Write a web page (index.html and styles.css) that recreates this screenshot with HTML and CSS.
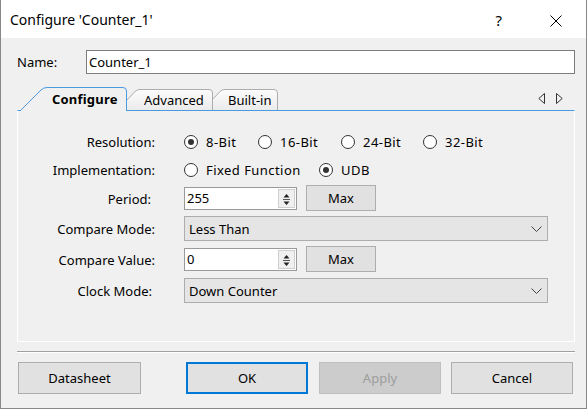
FILE: index.html
```html
<!DOCTYPE html>
<html>
<head>
<meta charset="utf-8">
<link rel="stylesheet" href="styles.css">
</head>
<body>
<div class="window">
  <div class="titlebar">
    <span class="title">Configure 'Counter_1'</span>
    <span class="help">?</span>
    <svg class="close" width="12" height="12" viewBox="0 0 12 12"><path d="M0.5,0.5 L11.5,11.5 M11.5,0.5 L0.5,11.5" stroke="#000" stroke-width="1" fill="none"/></svg>
  </div>
  <div class="content">
    <div class="name-row">
      <span class="name-label">Name:</span>
      <div class="name-box">Counter_1</div>
    </div>
    <div class="tabstrip">
      <div class="tab tab-active">
        <svg class="tab-shape" viewBox="0 0 110 24" preserveAspectRatio="none"><path d="M3,24 L24,3 Q26.5,0.5 30,0.5 L106,0.5 Q109.5,0.5 109.5,4 L109.5,24" fill="#f0f0f0" stroke="#4a9ae0"/></svg>
        <span class="tab-text">Configure</span>
      </div>
      <div class="tab tab-adv">
        <svg class="tab-shape" viewBox="0 0 96 21" preserveAspectRatio="none"><defs><linearGradient id="g1" x1="0" y1="0" x2="0" y2="1"><stop offset="0" stop-color="#fcfcfc"/><stop offset="1" stop-color="#ebebeb"/></linearGradient></defs><path d="M0.5,21 L18,2.5 Q20,0.5 23,0.5 L92,0.5 Q95.5,0.5 95.5,4 L95.5,21" fill="url(#g1)" stroke="#adadad"/></svg>
        <span class="tab-text">Advanced</span>
      </div>
      <div class="tab tab-bi">
        <svg class="tab-shape" viewBox="0 0 76 21" preserveAspectRatio="none"><defs><linearGradient id="g2" x1="0" y1="0" x2="0" y2="1"><stop offset="0" stop-color="#fcfcfc"/><stop offset="1" stop-color="#ebebeb"/></linearGradient></defs><path d="M0.5,21 L18,2.5 Q20,0.5 23,0.5 L72,0.5 Q75.5,0.5 75.5,4 L75.5,21" fill="url(#g2)" stroke="#adadad"/></svg>
        <span class="tab-text">Built-in</span>
      </div>
      <div class="tab-nav">
        <svg width="7" height="11" viewBox="0 0 7 11"><path d="M6.5,0.5 L0.8,5.5 L6.5,10.5 Z" fill="none" stroke="#333" stroke-width="1"/></svg>
        <svg width="7" height="11" viewBox="0 0 7 11"><path d="M0.5,0.5 L6.2,5.5 L0.5,10.5 Z" fill="none" stroke="#333" stroke-width="1"/></svg>
      </div>
    </div>
    <div class="panel">
      <div class="form">
        <span class="lbl">Resolution:</span>
        <div class="ctl">
          <div class="radio w74"><span class="circle checked"></span><span class="rtext">8-Bit</span></div>
          <div class="radio w83"><span class="circle"></span><span class="rtext">16-Bit</span></div>
          <div class="radio w82"><span class="circle"></span><span class="rtext">24-Bit</span></div>
          <div class="radio"><span class="circle"></span><span class="rtext">32-Bit</span></div>
        </div>

        <span class="lbl">Implementation:</span>
        <div class="ctl">
          <div class="radio w135"><span class="circle"></span><span class="rtext">Fixed Function</span></div>
          <div class="radio"><span class="circle checked"></span><span class="rtext">UDB</span></div>
        </div>

        <span class="lbl lbl-period">Period:</span>
        <div class="ctl">
          <div class="spin-input">
            <span class="spin-text">255</span>
            <div class="spin-btns">
              <svg width="15" height="19" viewBox="0 0 15 19"><path d="M7.5,4 L10.5,7.5 L4.5,7.5 Z" fill="#222"/><path d="M4,9.5 L11,9.5" stroke="#555" stroke-width="1"/><path d="M4.5,11.5 L10.5,11.5 L7.5,15 Z" fill="#222"/></svg>
            </div>
          </div>
          <div class="btn max-btn">Max</div>
        </div>

        <span class="lbl">Compare Mode:</span>
        <div class="ctl">
          <div class="dropdown"><span class="dd-text">Less Than</span>
            <svg width="11" height="6" viewBox="0 0 11 6"><path d="M0.5,0.5 L5.5,5.5 L10.5,0.5" fill="none" stroke="#444" stroke-width="1"/></svg>
          </div>
        </div>

        <span class="lbl">Compare Value:</span>
        <div class="ctl">
          <div class="spin-input">
            <span class="spin-text">0</span>
            <div class="spin-btns">
              <svg width="15" height="19" viewBox="0 0 15 19"><path d="M7.5,4 L10.5,7.5 L4.5,7.5 Z" fill="#222"/><path d="M4,9.5 L11,9.5" stroke="#555" stroke-width="1"/><path d="M4.5,11.5 L10.5,11.5 L7.5,15 Z" fill="#222"/></svg>
            </div>
          </div>
          <div class="btn max-btn">Max</div>
        </div>

        <span class="lbl lbl-clock">Clock Mode:</span>
        <div class="ctl">
          <div class="dropdown"><span class="dd-text">Down Counter</span>
            <svg width="11" height="6" viewBox="0 0 11 6"><path d="M0.5,0.5 L5.5,5.5 L10.5,0.5" fill="none" stroke="#444" stroke-width="1"/></svg>
          </div>
        </div>
      </div>
    </div>
    <div class="separator"></div>
    <div class="buttons">
      <div class="btn dlg-btn datasheet">Datasheet</div>
      <div class="btn dlg-btn ok">OK</div>
      <div class="btn dlg-btn apply">Apply</div>
      <div class="btn dlg-btn cancel">Cancel</div>
    </div>
  </div>
</div>
</body>
</html>
```
FILE: styles.css
```css
html, body {
  margin: 0;
  padding: 0;
}
body {
  width: 587px;
  height: 409px;
  overflow: hidden;
  font-family: "Noto Sans", "Liberation Sans", sans-serif;
  font-size: 13px;
  color: #000;
  background: #fff;
}
.window {
  width: 587px;
  height: 409px;
  box-sizing: border-box;
  border: 1px solid #888;
  border-top: none;
  display: flex;
  flex-direction: column;
  background: #f0f0f0;
}
.titlebar {
  height: 38px;
  flex: none;
  box-sizing: border-box;
  background: #fff;
  display: flex;
  align-items: flex-start;
  padding: 10px 24px 0 9px;
}
.title {
  font-size: 14px;
  line-height: 20px;
  flex: 1;
}
.help {
  font-size: 15px;
  line-height: 20px;
  margin-right: 48px;
}
.close {
  margin-top: 5px;
}
.content {
  flex: 1;
  display: flex;
  flex-direction: column;
  padding: 12px 11px 0 16px;
}
.name-row {
  display: flex;
  align-items: center;
  height: 24px;
}
.name-label {
  width: 69px;
}
.name-box {
  flex: 1;
  height: 24px;
  box-sizing: border-box;
  border: 1px solid #7d7d7d;
  background: #fff;
  padding-left: 2px;
  line-height: 22px;
}
.tabstrip {
  margin-top: 13px;
  height: 24px;
  margin-bottom: -1px;
  position: relative;
  z-index: 2;
  display: flex;
  align-items: flex-end;
}
.tab {
  position: relative;
  display: flex;
  align-items: center;
  box-sizing: border-box;
}
.tab-shape {
  position: absolute;
  left: 0;
  top: 0;
  width: 100%;
  height: 100%;
}
.tab-text {
  position: relative;
  line-height: 16px;
}
.tab-active {
  width: 110px;
  height: 24px;
  padding-left: 35px;
  padding-bottom: 1px;
  z-index: 3;
  font-weight: bold;
  letter-spacing: 0.2px;
}
.tab-adv {
  width: 96px;
  height: 21px;
  margin-left: -10px;
  margin-bottom: 1px;
  padding-left: 27px;
  z-index: 2;
}
.tab-bi {
  width: 76px;
  height: 21px;
  margin-left: -11px;
  margin-bottom: 1px;
  padding-left: 26px;
  z-index: 1;
}
.tab-nav {
  margin-left: auto;
  align-self: center;
  display: flex;
  gap: 11px;
  padding-right: 12px;
  margin-top: -2px;
}
.tab-nav svg {
  display: block;
}
.panel {
  height: 232px;
  box-sizing: border-box;
  border: 1px solid #fff;
  border-top-color: #4a9ae0;
  padding-top: 17px;
  flex: none;
}
.form {
  display: grid;
  grid-template-columns: 138px auto;
  grid-template-rows: 28px 28px 29px 31px 31px 31px;
  column-gap: 28px;
}
.lbl {
  justify-self: end;
  align-self: center;
  margin-right: 1px;
}
.lbl-period {
  margin-right: 5px;
}
.lbl-clock {
  margin-right: 4px;
}
.ctl {
  display: flex;
  align-items: center;
}
.radio {
  display: flex;
  align-items: center;
}
.rtext {
  letter-spacing: 0.45px;
}
.w74 { width: 74px; }
.w83 { width: 83px; }
.w82 { width: 82px; }
.w135 { width: 135px; }
.circle {
  width: 14px;
  height: 14px;
  box-sizing: border-box;
  border: 1px solid #333;
  border-radius: 50%;
  background: #fff;
  margin-right: 8px;
  display: flex;
  align-items: center;
  justify-content: center;
}
.circle.checked::after {
  content: "";
  width: 6px;
  height: 6px;
  border-radius: 50%;
  background: #333;
}
.spin-input {
  width: 113px;
  height: 23px;
  box-sizing: border-box;
  border: 1px solid #9a9a9a;
  background: #fff;
  display: flex;
  padding: 1px;
}
.spin-text {
  flex: 1;
  padding-left: 1px;
  line-height: 19px;
}
.spin-btns {
  width: 17px;
  box-sizing: border-box;
  border: 1px solid #cfcfcf;
  background: #f0f0f0;
}
.spin-btns svg {
  display: block;
}
.btn {
  box-sizing: border-box;
  border: 1px solid #adadad;
  background: #e1e1e1;
  display: flex;
  align-items: center;
  justify-content: center;
}
.max-btn {
  width: 70px;
  height: 26px;
  margin-left: 9px;
  margin-bottom: 2px;
}
.dropdown {
  width: 364px;
  height: 25px;
  box-sizing: border-box;
  border: 1px solid #adadad;
  background: #e5e5e5;
  display: flex;
  align-items: center;
  padding: 0 5px 0 4px;
}
.dd-text {
  flex: 1;
}
.separator {
  margin-top: 9px;
  height: 0;
  border-top: 1px solid #a0a0a0;
  border-bottom: 1px solid #fff;
}
.buttons {
  margin-top: 9px;
  display: flex;
  height: 32px;
}
.dlg-btn {
  width: 122px;
  height: 32px;
}
.datasheet {
  width: 123px;
  margin-left: 1px;
}
.ok {
  margin-left: auto;
  border: 2px solid #0078d7;
}
.apply {
  margin-left: 11px;
  background: #cccccc;
  border-color: #bfbfbf;
  color: #9d9d9d;
}
.cancel {
  margin-left: 10px;
  margin-right: 2px;
}
```
